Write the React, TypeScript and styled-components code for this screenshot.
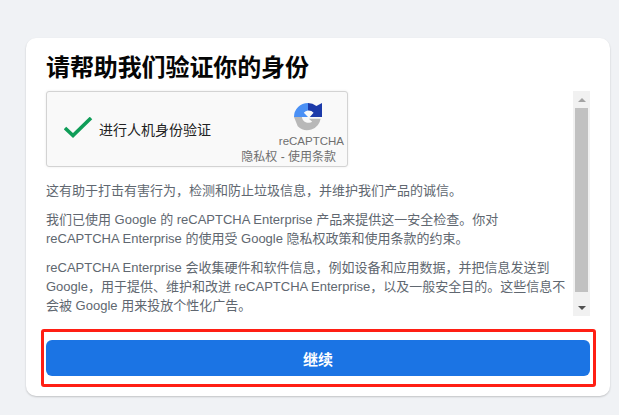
import React from 'react';
import styled, { createGlobalStyle } from 'styled-components';

const GlobalStyle = createGlobalStyle`
  html, body {
    margin: 0;
    padding: 0;
    height: 100%;
    overflow: hidden;
    background: #f0f2f5;
    font-family: "Liberation Sans", "Noto Sans CJK SC", sans-serif;
  }
`;

const Page = styled.div`
  box-sizing: border-box;
  width: 619px;
  height: 415px;
  padding: 38px 9px 0 26px;
`;

const Card = styled.div`
  box-sizing: border-box;
  width: 584px;
  height: 358px;
  padding: 13px 20px 0;
  background: #fff;
  border-radius: 10px;
  box-shadow: 0 1px 2px rgba(0, 0, 0, 0.2);
`;

const Title = styled.h1`
  margin: 0 0 6px;
  font-size: 24px;
  line-height: 34px;
  font-weight: 700;
  letter-spacing: -0.1px;
  color: #050505;
`;

const ScrollArea = styled.div`
  display: flex;
  justify-content: space-between;
  height: 225px;
`;

const Content = styled.div`
  width: 522px;
`;

const CaptchaBox = styled.div`
  box-sizing: border-box;
  display: flex;
  justify-content: space-between;
  width: 302px;
  height: 76px;
  margin-bottom: 14px;
  background: #f9f9f9;
  border: 1px solid #d3d3d3;
  border-radius: 3px;
  box-shadow: 0 0 3px rgba(0, 0, 0, 0.08);
`;

const CaptchaLeft = styled.div`
  display: flex;
  align-items: center;
  gap: 5px;
  padding: 0 0 0 17px;
`;

const CaptchaLabel = styled.span`
  font-size: 14px;
  color: #222;
`;

const CaptchaBrand = styled.div`
  display: flex;
  flex-direction: column;
  align-items: flex-end;
  padding: 11px 3px 0 0;
`;

const BrandIcon = styled.svg`
  display: block;
  width: 30px;
  height: 30px;
  margin: 0 21px 3px 0;
`;

const BrandName = styled.span`
  font-size: 11.5px;
  line-height: 15px;
  color: #6f6f6f;
`;

const BrandLinks = styled.span`
  font-size: 12px;
  line-height: 17px;
  margin-right: 8px;
  color: #6f6f6f;
`;

const Paragraph = styled.p`
  margin: 0 0 10px;
  font-size: 13px;
  line-height: 19px;
  color: #606770;
`;

const ScrollBar = styled.div`
  display: flex;
  flex-direction: column;
  width: 17px;
  background: #f1f1f1;
`;

const ScrollButton = styled.div<{ $down?: boolean }>`
  display: flex;
  align-items: center;
  justify-content: center;
  height: 17px;
  flex: none;

  &::before {
    content: '';
    border-left: 4px solid transparent;
    border-right: 4px solid transparent;
    ${(p) =>
      p.$down ? 'border-top: 4px solid #505050;' : 'border-bottom: 4px solid #a3a3a3;'}
  }
`;

const ScrollTrack = styled.div`
  flex: 1;
  padding: 0 2px;
`;

const ScrollThumb = styled.div`
  height: 184px;
  background: #c1c1c1;
`;

const Highlight = styled.div`
  box-sizing: border-box;
  width: 555px;
  height: 58px;
  margin: 13px 0 0 -5px;
  padding: 8px 2px;
  border: 3px solid #ff1f14;
  border-radius: 3px;
`;

const ContinueButton = styled.button`
  display: block;
  width: 544px;
  height: 36px;
  padding: 0;
  border: 0;
  border-radius: 6px;
  background: #1b74e4;
  color: #fff;
  font-family: inherit;
  font-size: 15px;
  font-weight: 700;
`;

function RecaptchaLogo() {
  return (
    <BrandIcon viewBox="0 0 30 30">
      <path d="M15 0a14.500 14.500 0 0 1 9 3.300L30 0v15H17l4-4.500a7 7 0 0 0-6-2.500z" fill="#1c3aa9" />
      <path d="M15 0v8a7 7 0 0 0-4.500 2.500L15 15H0a15 15 0 0 1 15-15z" fill="#4a90f5" />
      <path d="M0 15h8.500a7 7 0 0 0 11 5L16 17h12.500A14.500 14.500 0 0 1 4 25z" fill="#b8b8b8" />
    </BrandIcon>
  );
}

export default function App() {
  return (
    <Page>
      <GlobalStyle />
      <Card>
        <Title>请帮助我们验证你的身份</Title>
        <ScrollArea>
          <Content>
            <CaptchaBox>
              <CaptchaLeft>
                <svg width="30" height="24" viewBox="0 0 30 24">
                  <path d="M1 11l8 7.500L27 1" fill="none" stroke="#0f9d58" strokeWidth="3.600" />
                </svg>
                <CaptchaLabel>进行人机身份验证</CaptchaLabel>
              </CaptchaLeft>
              <CaptchaBrand>
                <RecaptchaLogo />
                <BrandName>reCAPTCHA</BrandName>
                <BrandLinks>隐私权 - 使用条款</BrandLinks>
              </CaptchaBrand>
            </CaptchaBox>
            <Paragraph>这有助于打击有害行为，检测和防止垃圾信息，并维护我们产品的诚信。</Paragraph>
            <Paragraph>
              我们已使用 Google 的 reCAPTCHA Enterprise 产品来提供这一安全检查。你对 reCAPTCHA Enterprise
              的使用受 Google 隐私权政策和使用条款的约束。
            </Paragraph>
            <Paragraph>
              reCAPTCHA Enterprise 会收集硬件和软件信息，例如设备和应用数据，并把信息发送到
              Google，用于提供、维护和改进 reCAPTCHA Enterprise，以及一般安全目的。这些信息不会被 Google
              用来投放个性化广告。
            </Paragraph>
          </Content>
          <ScrollBar>
            <ScrollButton />
            <ScrollTrack>
              <ScrollThumb />
            </ScrollTrack>
            <ScrollButton $down />
          </ScrollBar>
        </ScrollArea>
        <Highlight>
          <ContinueButton>继续</ContinueButton>
        </Highlight>
      </Card>
    </Page>
  );
}
